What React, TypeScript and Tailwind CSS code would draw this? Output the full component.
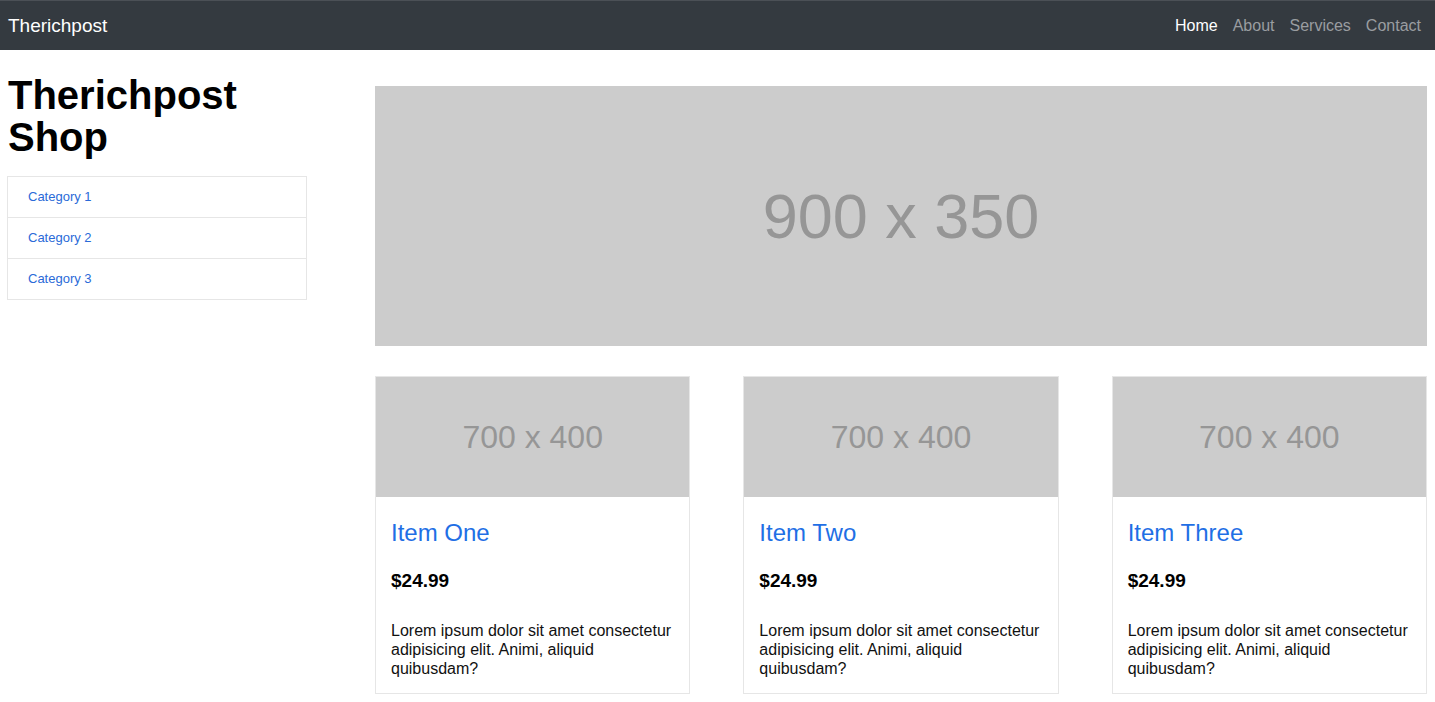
import React from "react";

const font = { fontFamily: '"Liberation Sans", Arial, sans-serif' };

function Card({ title }: { title: string }) {
  return (
    <div className="flex flex-col border border-[#e6e6e6] bg-white h-[318px]">
      <div className="h-[120px] bg-[#cccccc] flex items-center justify-center text-[32px] text-[#969696] leading-none">
        700 x 400
      </div>
      <div className="px-[15px] pt-[22px]">
        <h4 className="text-[24px] leading-[28.8px] text-[#1f6fe5]">{title}</h4>
        <h5 className="mt-[22px] text-[19px] leading-[22.8px] font-bold text-black">$24.99</h5>
        <p className="mt-[28px] text-[16px] leading-[19px] text-[#111]">
          Lorem ipsum dolor sit amet consectetur adipisicing elit. Animi, aliquid quibusdam?
        </p>
      </div>
    </div>
  );
}

export default function App() {
  return (
    <div style={font} className="w-full bg-white text-black">
      <nav className="h-[50px] bg-[#343a40] border-t border-[#4b5056] flex items-center justify-between pl-2 pr-[6px]">
        <span className="text-[19px] text-white mt-px">Therichpost</span>
        <ul className="flex items-center text-[16px] mt-px">
          <li className="px-[7.5px] text-white">Home</li>
          <li className="px-[7.5px] text-[#9a9da0]">About</li>
          <li className="px-[7.5px] text-[#9a9da0]">Services</li>
          <li className="pl-[7.5px] pr-[8px] text-[#9a9da0]">Contact</li>
        </ul>
      </nav>
      <div className="flex pl-[7px]">
        <div className="w-[300px] shrink-0">
          <h1 className="mt-[24px] ml-px text-[40px] leading-[42px] font-bold">
            Therichpost
            <br />
            Shop
          </h1>
          <div className="mt-[18px] border border-[#e6e6e6]">
            {["Category 1", "Category 2", "Category 3"].map((c, i) => (
              <div
                key={c}
                className={`h-[40px] flex items-center pl-[20px] text-[13px] text-[#2a6ad8] ${
                  i > 0 ? "border-t border-[#e6e6e6] h-[41px]" : ""
                }`}
              >
                {c}
              </div>
            ))}
          </div>
        </div>
        <div className="ml-[68px] w-[1052px] shrink-0">
          <div className="mt-[36px] h-[260px] bg-[#cccccc] flex items-center justify-center text-[63px] text-[#969696] leading-none">
            900 x 350
          </div>
          <div className="mt-[30px] grid grid-cols-3 gap-x-[53px]">
            <Card title="Item One" />
            <Card title="Item Two" />
            <Card title="Item Three" />
          </div>
        </div>
      </div>
    </div>
  );
}
